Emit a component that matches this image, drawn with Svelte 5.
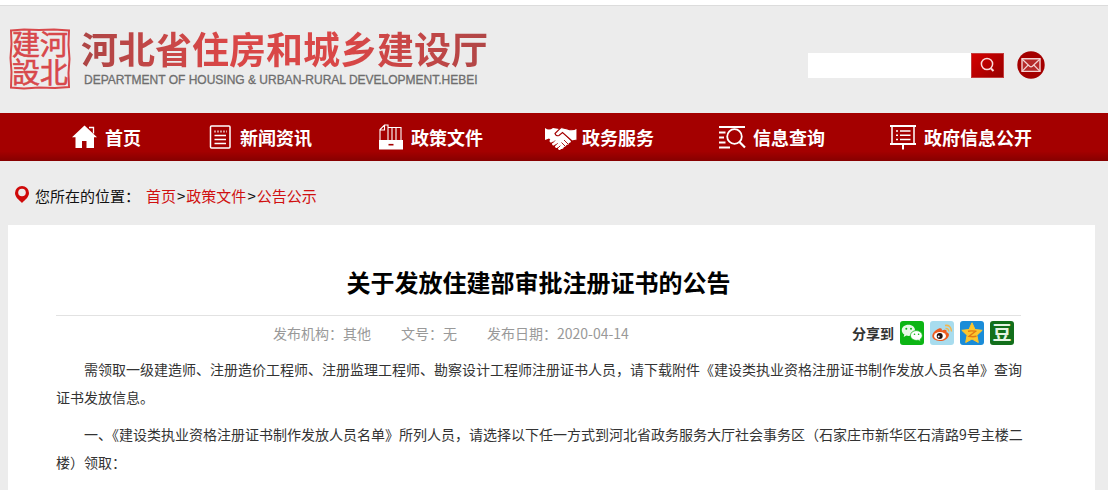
<script>
  const nav = [
    { label: '首页', icon: 'home', box: '3 0 32 28' },
    { label: '新闻资讯', icon: 'news', box: '0 0 32 28' },
    { label: '政策文件', icon: 'files', box: '3 0 32 28' },
    { label: '政务服务', icon: 'hands', box: '0 0 32 28' },
    { label: '信息查询', icon: 'query', box: '-2 0 32 28' },
    { label: '政府信息公开', icon: 'board', box: '-1 0 32 28' }
  ];
  let keyword = $state('');
</script>

<div class="page">
  <header>
    <a class="brand" href="#home">
      <svg class="seal" viewBox="0 0 62 62" aria-hidden="true">
        <path d="M2 2.5 15 1.5 30 2 45 1.5 60 2.5 59.5 17 60.5 31 59.5 45 60 59 46 60 30 59.5 15 60.5 2 59.5 2.5 44 1.5 30 2.5 16Z" fill="none" stroke="currentColor" stroke-width="2" />
        <g fill="currentColor" stroke="currentColor" stroke-width=".6" font-size="28">
          <text x="3" y="27">建</text>
          <text x="31" y="27">河</text>
          <text x="3" y="55">設</text>
          <text x="31" y="55">北</text>
        </g>
      </svg>
      <span class="names">
        <span class="cn">河北省住房和城乡建设厅</span>
        <span class="en">DEPARTMENT OF HOUSING &amp; URBAN-RURAL DEVELOPMENT.HEBEI</span>
      </span>
    </a>
    <form class="search" onsubmit={(e) => e.preventDefault()}>
      <input type="text" aria-label="搜索" bind:value={keyword} />
      <button type="submit" aria-label="搜索">
        <svg width="16" height="16" viewBox="0 0 16 16" fill="none" stroke="#fbdcdc" stroke-width="1.5">
          <circle cx="7" cy="7" r="5.6" /><path d="m11 11.500 2.500 2.500" stroke-width="2" />
        </svg>
      </button>
      <a class="mail" href="#mail" aria-label="信箱">
        <svg width="28" height="28" viewBox="0 0 28 28">
          <circle cx="14" cy="14" r="13.7" fill="#a40000" />
          <path d="M5 7.8h18v12.6H5z" fill="#b52a2a" stroke="#f3d2d2" stroke-width="1.4" />
          <path d="m5 8 7.6 7.2q1.4 1.2 2.8 0L23 8M5 20.3l6.200-6.300M23 20.300l-6.200-6.300" fill="none" stroke="#f3d2d2" stroke-width="1.200" />
        </svg>
      </a>
    </form>
  </header>

  <nav>
    {#each nav as item}
      <a href="#{item.icon}">
        <svg width="32" height="28" viewBox={item.box} fill="none" stroke="#fff" aria-hidden="true">
          {#if item.icon === 'home'}
            <path d="M19.500 2.500 7 14.200h3.500V25H17v-7h4.500v7H29V14.200h3Z" fill="#fff" stroke="none" />
            <path d="M24 4.500h4.500v6" stroke-width="1.300" />
          {:else if item.icon === 'news'}
            <rect x="7.500" y="3" width="19.500" height="22" rx="1" stroke-width="1.500" />
            <path d="M11.500 12.500h11.500M11.500 16.500h11.500M11.500 20.500h11.500" stroke-width="1.600" />
            <path d="M11 8.500h13" stroke-width="2" stroke-dasharray="2 1" opacity=".6" />
          {:else if item.icon === 'files'}
            <path d="M9 17V6.500L13.500 2H17v15M9 7h4.500V2M17 4.500h4V17M21 4.500h4V17M25 4.500h5V17" stroke-width="1.100" />
            <path d="M8 17h24v9.500H8z" fill="#fff" stroke="none" />
            <path d="M17.500 21.700h5" stroke="#a40000" stroke-width="1.600" />
          {:else if item.icon === 'hands'}
            <path d="M0 5q4 3 8 0l6 1 12 12q0 2-2 2 0 2-2.500 2-.5 2-2.500 2-1 3-4 1.500L4 15.500 0 17Z" fill="#fff" stroke="none" />
            <path d="m10 10.500 6-6 6.500 1.500q5 2 9.500-1v12l-5 1-9.500-8.500-3.500 3q-3 1-4-2Z" fill="#fff" stroke="#a40000" stroke-width="1.100" />
            <g stroke="#fff" stroke-width="3" stroke-linecap="round"><path d="m6 18 1.500-1.500M8.500 21l2.500-2.500M11.500 23.500l2.500-2.500M14.500 25.500l1.500-1.500" /></g>
            <path d="m7.500 20 2.500-2.500M10.300 22.500l2.400-2.400M13.300 24.700l2-2M19 17l4 4M16.500 19.500l4 4" stroke="#a40000" stroke-width=".9" />
          {:else if item.icon === 'query'}
            <path d="M1 4h26M1 9.500h6.500M1 14.500h5M1 19.500h6.500M1 24.500h11" stroke-width="1.800" />
            <circle cx="16.500" cy="13.500" r="7.300" stroke-width="1.800" />
            <path d="m21.500 19 5.500 5.500" stroke-width="2.200" />
          {:else}
            <path d="M2 3h26M2 21h26" stroke-width="2" />
            <path d="M4 3v18M26 3v18" stroke-width="1.500" />
            <path d="M8 8h2M8 12.200h2M8 16.400h2M12 8h10.500M12 12.200h10.500M12 16.400h10.500" stroke-width="1.500" />
            <path d="M15 21v5.500" stroke-width="2" />
          {/if}
        </svg>
        {item.label}
      </a>
    {/each}
  </nav>

  <div class="crumbs">
    <svg width="16" height="20" viewBox="0 0 16 20" aria-hidden="true">
      <path d="M8 1a7 7 0 0 1 7 7c0 4-4 7-7 10-3-3-7-6-7-10a7 7 0 0 1 7-7Z" fill="#cf0a0a" />
      <circle cx="8" cy="7.500" r="3.800" fill="#ececec" />
    </svg>
    <span class="where">您所在的位置：</span>
    <a href="#home">首页</a>&gt;<a href="#files">政策文件</a>&gt;<a href="#notice">公告公示</a>
  </div>

  <main>
    <h1>关于发放住建部审批注册证书的公告</h1>
    <div class="meta">
      <div class="facts">
        <span>发布机构：其他</span>
        <span>文号：无</span>
        <span>发布日期：2020-04-14</span>
      </div>
      <div class="share">
        <b>分享到</b>
        <a href="#wechat" aria-label="微信">
          <svg viewBox="0 0 24 24">
            <rect width="24" height="24" rx="3" fill="#0cb514" />
            <path d="M8.500 3.800c-4 0-6.700 2.400-6.700 5.500 0 1.900 1 3.300 2.500 4.300L3.700 16l2.700-1.400c1.500.4 3 .4 4.300 0Q15 13.500 15 9.300c0-3.100-2.700-5.500-6.500-5.500Z" fill="#e8f8e8" />
            <path d="M16.500 9.600c-3.500 0-6 2.200-6 4.900s2.500 4.900 6 4.900l1.700-.2 2.300 1.300-.5-2c1.400-1 2.300-2.300 2.300-4 0-2.700-2.500-4.900-5.800-4.900Z" fill="#fff" stroke="#0cb514" stroke-width=".8" />
            <g fill="#0cb514"><circle cx="6.300" cy="7.700" r="1" /><circle cx="11" cy="7.700" r="1" /><circle cx="14.500" cy="13.200" r=".8" /><circle cx="18.600" cy="13.200" r=".8" /></g>
          </svg>
        </a>
        <a href="#weibo" aria-label="微博">
          <svg viewBox="0 0 24 24">
            <rect width="24" height="24" rx="3" fill="#a8dcee" />
            <path d="M9 7.500c2-.7 3.300.2 2.800 2 3-1.300 5.500-.8 4.700 1.700 2 .6 2.800 1.700 2.300 3.500-.8 3-4.500 5.300-9 5.300-4.300 0-7.500-2-7.500-4.900C2.300 12 6 8.500 9 7.500Z" fill="#ee5a1e" />
            <ellipse cx="10" cy="15" rx="6" ry="4" fill="#fff" />
            <circle cx="9.700" cy="15" r="3" fill="#211" /><circle cx="8.700" cy="15.500" r="1" fill="#fff" />
            <path d="M15 4.500q6-1 6.500 6M15.500 7.500q3-.5 3.300 3" fill="none" stroke="#f3b64e" stroke-width="1.500" />
          </svg>
        </a>
        <a href="#qzone" aria-label="QQ空间">
          <svg viewBox="0 0 24 24">
            <rect width="24" height="24" rx="3" fill="#1a8cd8" />
            <path d="m12 1.800 3 6.700 7.200.8-5.300 5 1.400 7.200L12 18l-6.300 3.500 1.400-7.200-5.300-5 7.200-.8Z" fill="#fdc62c" stroke="#fdc62c" stroke-width="1" stroke-linejoin="round" />
            <path d="M8 10.300q4-.8 7.500 0l-6.500 5q4 .8 7.500 0" fill="none" stroke="#e27a14" stroke-width="1.400" />
          </svg>
        </a>
        <a href="#douban" aria-label="豆瓣">
          <svg viewBox="0 0 24 24">
            <rect width="24" height="24" rx="3" fill="#126f1b" />
            <text x="12" y="19" text-anchor="middle" font-size="19" font-weight="700" fill="#e6f4e4">豆</text>
          </svg>
        </a>
      </div>
    </div>
    <article>
      <p>需领取一级建造师、注册造价工程师、注册监理工程师、勘察设计工程师注册证书人员，请下载附件《建设类执业资格注册证书制作发放人员名单》查询证书发放信息。</p>
      <p>一、《建设类执业资格注册证书制作发放人员名单》所列人员，请选择以下任一方式到河北省政务服务大厅社会事务区（石家庄市新华区石清路9号主楼二楼）领取：</p>
    </article>
  </main>
</div>

<style>
  :global(body) {
    background: #ececec;
    font-family: 'Noto Sans CJK SC', sans-serif;
  }
  .page {
    border-top: 5px solid #fff;
    box-shadow: inset 0 1px #dcdcdc;
    color: #111;
  }
  a {
    color: inherit;
    text-decoration: none;
  }
  svg {
    display: block;
    flex: none;
    overflow: visible;
  }
  header {
    display: flex;
    justify-content: space-between;
    align-items: center;
    height: 108px;
    padding: 0 63px 0 9px;
  }
  .brand {
    display: flex;
    align-items: center;
    gap: 10px;
  }
  .seal {
    width: 62px;
    height: 62px;
    color: #d8484b;
  }
  .names {
    display: flex;
    flex-direction: column;
  }
  .cn {
    margin-top: -2px;
    font-size: 37px;
    line-height: 44px;
    font-weight: 700;
    background: linear-gradient(90deg, #ad4646, #d94747 35%, #d94747 65%, #b04646);
    background-clip: text;
    color: transparent;
  }
  .en {
    padding-left: 3px;
    font: 12px/20px 'Liberation Sans', sans-serif;
    color: #6e6e6e;
    -webkit-text-stroke: 0.3px #6e6e6e;
  }
  .search {
    display: flex;
    align-items: center;
    margin-top: 12px;
  }
  .search input {
    width: 163px;
    height: 25px;
    box-sizing: border-box;
    border: 0;
    padding: 0 6px;
    background: #fff;
  }
  .search button {
    display: grid;
    place-items: center;
    width: 33px;
    height: 25px;
    padding: 0;
    border: 1px solid #c43c3c;
    background: linear-gradient(135deg, #d40000, #980000);
  }
  .mail {
    margin-left: 13px;
  }
  nav {
    display: flex;
    height: 48px;
    padding-left: 36px;
    background: linear-gradient(#a40000 80%, #860000);
    color: #fff;
  }
  nav a {
    display: flex;
    align-items: center;
    gap: 5px;
    padding: 0 30px 0 32px;
    font-size: 18px;
    font-weight: 700;
    white-space: nowrap;
  }
  .crumbs {
    display: flex;
    align-items: center;
    height: 64px;
    padding: 4px 14px 0;
    box-sizing: border-box;
    font-size: 15px;
  }
  .crumbs a {
    margin: 0 1px;
    color: #d01010;
  }
  .where {
    margin: 0 5px;
  }
  main {
    margin: 0 13px 0 8px;
    padding: 35px 70px 24px 48px;
    background: #fff;
  }
  h1 {
    margin: 0 4px 0 0;
    padding-bottom: 12px;
    font-size: 24px;
    line-height: 43px;
    text-align: center;
    color: #000;
  }
  .meta {
    display: flex;
    justify-content: space-between;
    align-items: center;
    margin-right: 4px;
    padding: 5px 7px 0 217px;
    border-top: 1px solid #e2e2e2;
  }
  .facts {
    display: flex;
    gap: 30px;
    font-size: 14px;
    color: #999;
  }
  .share {
    display: flex;
    align-items: center;
    gap: 6px;
    font-size: 14px;
    color: #333;
  }
  .share svg {
    width: 24px;
    height: 24px;
  }
  article {
    padding-top: 10px;
    font-size: 14px;
    line-height: 28px;
    color: #333;
  }
  p {
    margin: 0 0 9px;
    text-indent: 2em;
  }
</style>
